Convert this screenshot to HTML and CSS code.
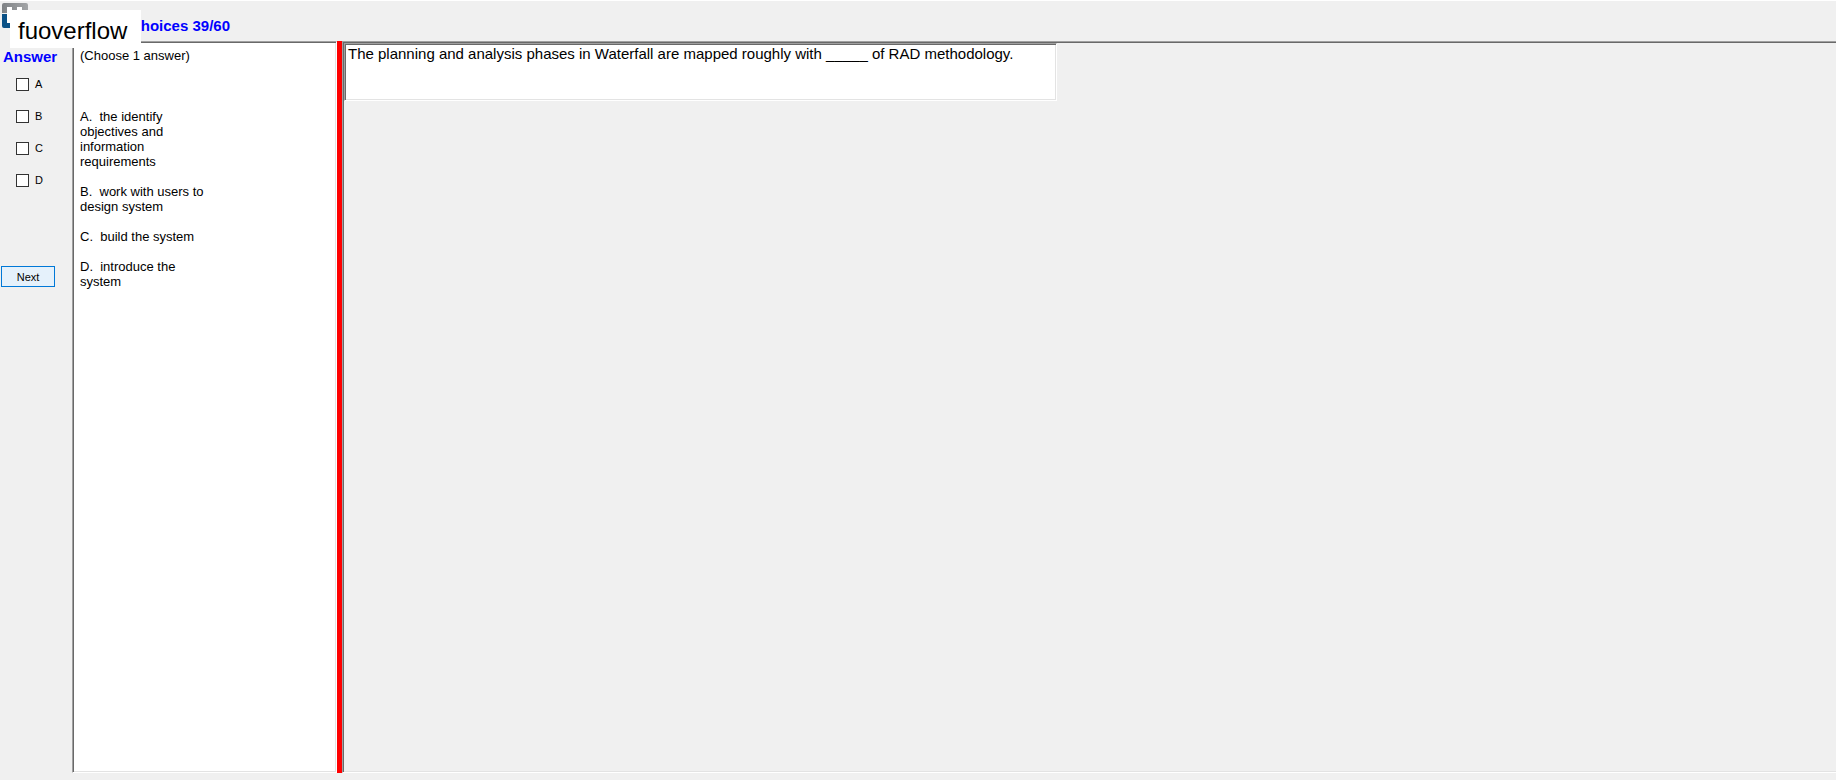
FILE: index.html
```html
<!DOCTYPE html>
<html lang="en">
<head>
<meta charset="utf-8">
<title>Multiple choices 39/60</title>
<link rel="stylesheet" href="styles.css">
</head>
<body>
<header class="header">
  <svg class="logo" viewBox="0 0 26 26" aria-hidden="true">
    <defs>
      <linearGradient id="steel" x1="0" y1="0" x2="1" y2="0">
        <stop offset="0" stop-color="#7f8285"/>
        <stop offset="1" stop-color="#a3a5a7"/>
      </linearGradient>
    </defs>
    <path d="M5 4H26V20H5Z" fill="#fff"/>
    <path d="M0 2Q0 0 2 0H24Q26 0 26 2V10H20V4H15V10H10V4H5V10H0Z" fill="url(#steel)"/>
    <path d="M0 11H5V20H15V25H2Q0 25 0 23Z" fill="#0b5186"/>
  </svg>
  <h1 class="title">hoices 39/60</h1>
  <div class="watermark">fuoverflow</div>
</header>
<main class="main">
  <form class="answers">
    <h2 class="answers-title">Answer</h2>
    <div class="options">
      <label class="option"><input class="check" type="checkbox" name="a">A</label>
      <label class="option"><input class="check" type="checkbox" name="b">B</label>
      <label class="option"><input class="check" type="checkbox" name="c">C</label>
      <label class="option"><input class="check" type="checkbox" name="d">D</label>
    </div>
    <button class="next" type="button">Next</button>
  </form>
  <section class="sunken choices">
    <p class="hint">(Choose 1 answer)</p>
    <p class="choice">A.  the identify objectives and information requirements</p>
    <p class="choice">B.  work with users to design system</p>
    <p class="choice">C.  build the system</p>
    <p class="choice">D.  introduce the system</p>
  </section>
  <div class="splitter"></div>
  <section class="sunken stage">
    <p class="sunken question">The planning and analysis phases in Waterfall are mapped roughly with _____ of RAD methodology.</p>
  </section>
</main>
</body>
</html>
```

FILE: styles.css
```css
* {
  box-sizing: border-box;
}

body {
  margin: 0;
  min-height: 100vh;
  display: flex;
  flex-direction: column;
  background: #f0f0f0;
  border-top: 1px solid #fff;
  color: #000;
  font-family: "Liberation Sans", Arial, sans-serif;
  font-size: 13px;
  line-height: 15px;
}

h1, h2, p {
  margin: 0;
}

.header {
  position: relative;
  height: 40px;
  flex: none;
  padding: 2px;
  display: flex;
}

.logo {
  width: 26px;
  height: 26px;
}

.title {
  width: 202px;
  padding-top: 14px;
  color: #0000ff;
  font-size: 15px;
  line-height: 18px;
  text-align: right;
  white-space: nowrap;
}

.watermark {
  position: absolute;
  left: 10px;
  top: 9px;
  z-index: 1;
  padding: 7px 14px 3px 8px;
  background: #fff;
  font-size: 24px;
  line-height: 28px;
}

.main {
  flex: 1;
  display: flex;
  padding-bottom: 7px;
}

.answers {
  width: 72px;
  flex: none;
  padding: 7px 1px 0;
}

.answers-title {
  padding-left: 2px;
  color: #0000ff;
  font-size: 15px;
  line-height: 18px;
}

.options {
  display: flex;
  flex-direction: column;
  gap: 16px;
  padding: 10px 0 0 15px;
}

.option {
  display: flex;
  align-items: center;
  gap: 6px;
  height: 16px;
  font-size: 11px;
}

.check {
  appearance: none;
  width: 13px;
  height: 13px;
  margin: 0;
  border: 1px solid #333;
  background: #fff;
}

.check:checked {
  background: #333;
}

.next {
  display: block;
  width: 54px;
  height: 21px;
  margin-top: 78px;
  padding: 0;
  border: 1px solid #0078d7;
  background: #e5f1fb;
  color: #000;
  font: 11px "Liberation Sans", Arial, sans-serif;
}

.sunken {
  border: 1px solid;
  border-color: #a0a0a0 #fff #fff #a0a0a0;
  box-shadow: inset 1px 1px #696969, inset -1px -1px #e3e3e3;
}

.choices {
  width: 265px;
  flex: none;
  padding: 6px 7px;
  background: #fff;
}

.hint {
  margin-bottom: 46px;
}

.choice {
  width: 128px;
  margin-bottom: 15px;
  white-space: pre-wrap;
}

.splitter {
  width: 5px;
  flex: none;
  background: #ff0000;
}

.stage {
  flex: 1;
  padding: 1px;
  border-right: 0;
  box-shadow: inset 1px 1px #696969, inset 0 -1px #e3e3e3;
}

.question {
  max-width: 713px;
  min-height: 58px;
  padding: 1px 3px;
  background: #fff;
  font-size: 15px;
  line-height: 18px;
}
```
